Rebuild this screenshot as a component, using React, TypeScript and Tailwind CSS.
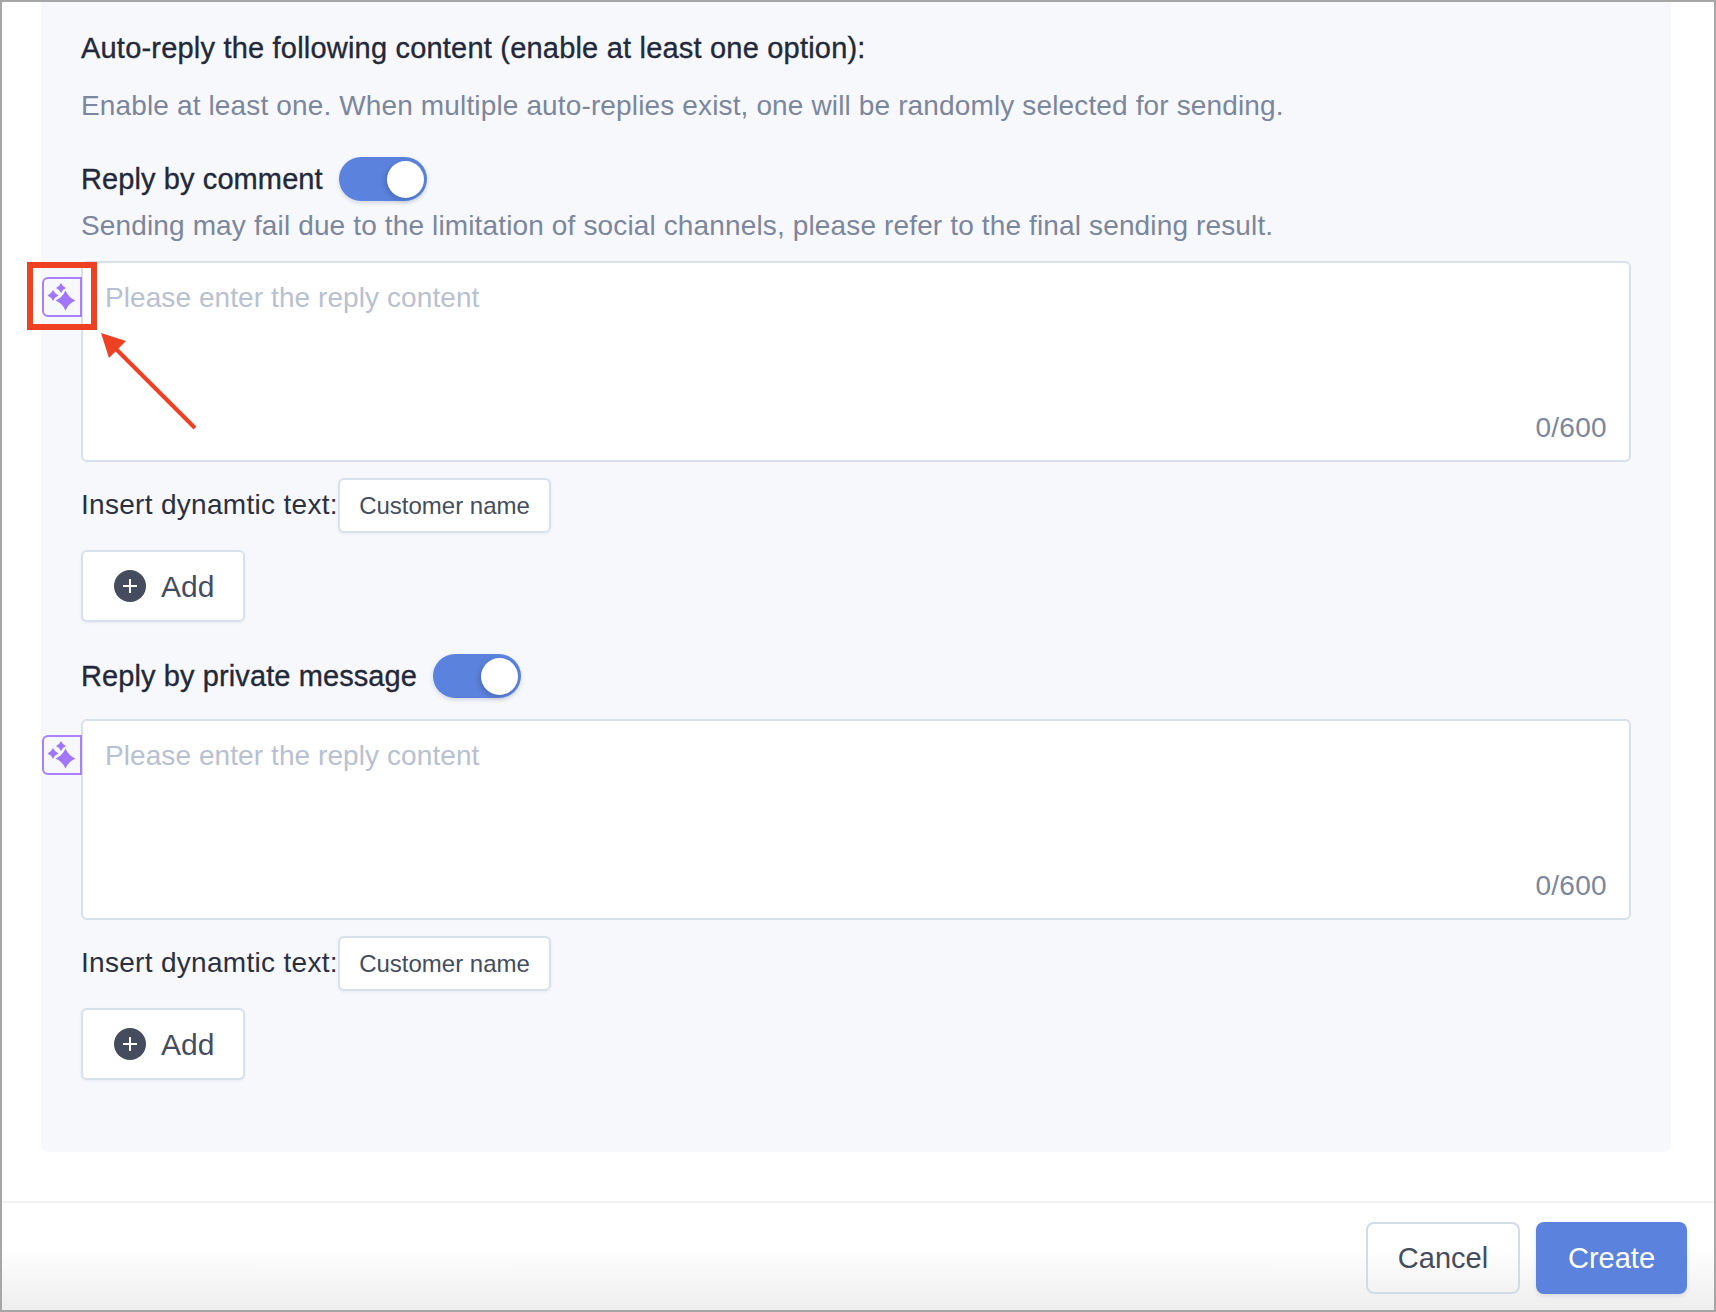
const sans = "font-['Liberation_Sans',Arial,sans-serif]";

function star(cx: number, cy: number, r: number) {
  const k = r * 0.3;
  return `M${cx} ${cy - r}Q${cx + k} ${cy - k} ${cx + r} ${cy}Q${cx + k} ${cy + k} ${cx} ${cy + r}Q${cx - k} ${cy + k} ${cx - r} ${cy}Q${cx - k} ${cy - k} ${cx} ${cy - r}Z`;
}

function AiButton() {
  return (
    <div className="absolute left-[-41px] top-[14px] h-10 w-10 rounded-l-md border-[2.5px] border-[#a97ffb] bg-[#f6f8fc]">
      <svg viewBox="0 0 35 35" className="h-[35px] w-[35px]" fill="#a176fb">
        <path d={star(21.5, 21.5, 10)} />
        <path d={star(9, 16.5, 5.5)} />
        <path d={star(17, 9, 5)} />
      </svg>
    </div>
  );
}

function Toggle() {
  return (
    <div className="flex h-11 w-[88px] items-center justify-end rounded-full bg-[#5b83dd] pr-[3px] shadow-[0_2px_4px_rgba(60,80,130,0.2)]">
      <div className="h-[37px] w-[37px] rounded-full bg-white shadow-[-2px_2px_5px_rgba(30,40,80,0.25)]" />
    </div>
  );
}

function ReplyBox() {
  return (
    <div className="relative h-[201px] w-[1550px] rounded-md border-2 border-[#d8e0e9] bg-white">
      <AiButton />
      <p className="pl-[22px] pt-[17px] text-[28px] leading-[36px] tracking-[0.08px] text-[#b9c0d1]">
        Please enter the reply content
      </p>
      <span className="absolute bottom-[14px] right-[22px] text-[28px] leading-[36px] tracking-[0.3px] text-[#7c869c]">
        0/600
      </span>
    </div>
  );
}

function DynamicText() {
  return (
    <div className="mt-[16px] flex h-[55px] items-center">
      <span className="w-[257px] pb-[2px] text-[28px] tracking-[0.3px] text-[#2b3040]">Insert dynamtic text:</span>
      <button className="h-[55px] w-[213px] rounded-md border-2 border-[#d8e0e9] bg-white text-[24px] text-[#454c5e] shadow-[0_1px_3px_rgba(60,80,130,0.08)]">
        Customer name
      </button>
    </div>
  );
}

function AddButton() {
  return (
    <button className="mt-[17px] flex h-[72px] w-[164px] items-center gap-[15px] rounded-md border-2 border-[#d8e0e9] bg-white pl-[31px] text-[30px] text-[#454c5e] shadow-[0_1px_3px_rgba(60,80,130,0.08)]">
      <svg viewBox="0 0 32 32" className="h-8 w-8 shrink-0">
        <circle cx="16" cy="16" r="16" fill="#454c5e" />
        <path d="M16 9v14M9 16h14" stroke="#fff" strokeWidth="2" />
      </svg>
      Add
    </button>
  );
}

export default function App() {
  return (
    <div className={`relative flex h-[1312px] w-[1716px] flex-col border-2 border-[#a6a6a6] bg-white ${sans}`}>
      <main className="ml-[39px] h-[1150px] w-[1630px] rounded-b-lg bg-[#f6f8fc] pl-[40px] pt-[26px]">
        <h2 className="h-10 text-[29px] leading-10 tracking-[0.2px] text-[#23283a] [-webkit-text-stroke:0.35px_#23283a]">
          Auto-reply the following content (enable at least one option):
        </h2>
        <p className="mt-[18px] h-10 text-[28px] leading-10 tracking-[0.14px] text-[#7c869c]">
          Enable at least one. When multiple auto-replies exist, one will be randomly selected for sending.
        </p>

        <div className="mt-[31px] flex h-11 items-center gap-4">
          <span className="pt-[2px] text-[29px] tracking-[0.1px] text-[#23283a] [-webkit-text-stroke:0.35px_#23283a]">Reply by comment</span>
          <Toggle />
        </div>
        <p className="mt-[7px] h-9 text-[28px] leading-9 tracking-[0.14px] text-[#7c869c]">
          Sending may fail due to the limitation of social channels, please refer to the final sending result.
        </p>
        <div className="mt-[17px]">
          <ReplyBox />
        </div>
        <DynamicText />
        <AddButton />

        <div className="mt-8 flex h-11 items-center gap-4">
          <span className="pt-[2px] text-[29px] tracking-[0.1px] text-[#23283a] [-webkit-text-stroke:0.35px_#23283a]">Reply by private message</span>
          <Toggle />
        </div>
        <div className="mt-[21px]">
          <ReplyBox />
        </div>
        <DynamicText />
        <AddButton />
      </main>

      <footer className="mt-[49px] flex flex-1 items-start justify-end gap-4 border-t-2 border-[#f1f2f4] bg-gradient-to-b from-white from-40% to-[#eeeeee] pr-[27px] pt-[19px]">
        <button className="h-[72px] w-[154px] rounded-lg border-2 border-[#d3dce6] bg-transparent pt-[2px] text-[29px] text-[#454c5e]">
          Cancel
        </button>
        <button className="h-[72px] w-[151px] rounded-lg bg-[#5b83dd] pt-[2px] text-[29px] text-white shadow-[0_2px_4px_rgba(60,80,130,0.15)]">
          Create
        </button>
      </footer>

      {/* annotation */}
      <div className="absolute left-[25px] top-[260px] h-[68px] w-[70px] border-[6px] border-[#ee4023]" />
      <svg className="absolute left-[95px] top-[328px]" width="110" height="105" viewBox="0 0 110 105" fill="none">
        <path d="M98 98L18 18" stroke="#ee4023" strokeWidth="4" />
        <path d="M4 3L29 11L12 28Z" fill="#ee4023" />
      </svg>
    </div>
  );
}
